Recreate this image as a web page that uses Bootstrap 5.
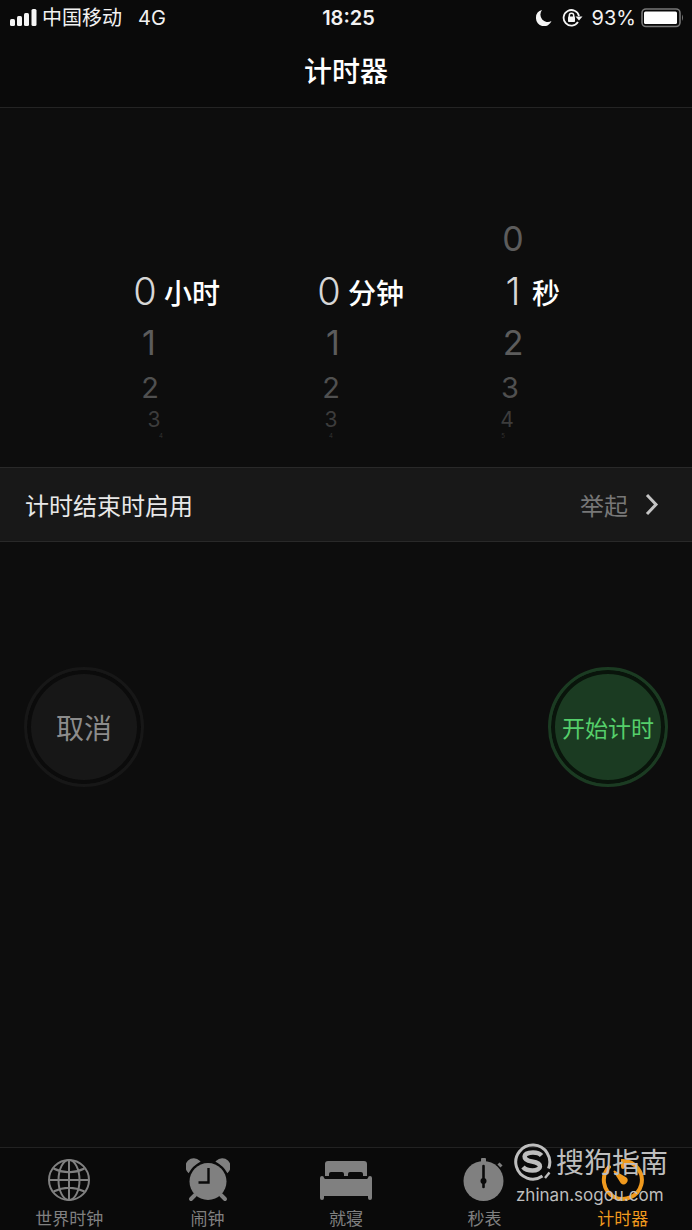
<!DOCTYPE html>
<html lang="zh-CN" data-bs-theme="dark">
<head>
<meta charset="utf-8">
<meta name="viewport" content="width=device-width, initial-scale=1">
<title>计时器</title>
<link rel="stylesheet" href="https://cdn.jsdelivr.net/npm/bootstrap@5.3.0/dist/css/bootstrap.min.css">
<style>
  body { background: #0d0d0d; color: #f2f2f2; font-family: Inter, "Noto Sans CJK SC", sans-serif; font-size: 20px; line-height: 24px; }
  .top-area { background: #0a0a0a; border-bottom: 1px solid #242424; }
  .status-bar { height: 36px; padding: 0 8px 0 9px; display: grid; grid-template-columns: 1fr auto 1fr; align-items: center; }
  .clock-time { font-weight: 600; padding-left: 4px; }
  .screen-title { font-size: 28px; line-height: 40px; font-weight: 500; padding: 16px 0 15px; }
  .picker { padding: 105px 0 28px; }
  .wheel { width: 184px; padding-left: 60px; }
  .wheel-row { display: flex; align-items: center; height: 52px; font-size: 34px; line-height: 34px; color: #5c5c5c; }
  .digit { width: 30px; text-align: center; flex: none; }
  .wheel-row.current { font-size: 38px; color: #d6d6d6; }
  .current .digit { font-weight: 300; }
  .wheel-row .unit { font-size: 28px; font-weight: 500; color: #fff; padding: 5px 0 0 4px; white-space: nowrap; }
  .wheel-row.far { height: 38px; font-size: 29px; color: #505050; }
  .wheel-row.edge { height: 26px; font-size: 21px; line-height: 20px; color: #3c3c3c; }
  .wheel-row.sliver { height: 6px; font-size: 6px; line-height: 6px; color: #333; }
  .hours .near, .minutes .near { padding-left: 4px; }
  .hours .far { padding-left: 5px; }
  .hours .edge { padding-left: 9px; }
  .hours .sliver { padding-left: 16px; }
  .minutes .far, .minutes .edge, .minutes .sliver { padding-left: 2px; }
  .seconds .far { margin-left: -3px; }
  .seconds .edge { margin-left: -6px; }
  .seconds .sliver { margin-left: -10px; }
  .option-row { background: #181818; border-top: 1px solid #292929; border-bottom: 1px solid #292929; height: 75px; padding: 0 32px 0 25px; font-size: 24px; color: #e8e8e8; }
  .option-label, .option-value { padding-top: 5px; }
  .option-row:hover { color: #fff; }
  .option-value { color: #777; }
  .actions { padding: 125px 24px 0; }
  .round-btn { width: 120px; height: 120px; border-radius: 50%; padding: 4px 0 0; border: 3px solid #171717; background: #171717; box-shadow: inset 0 0 0 4px #0b0b0b; color: #8c8c8c; font-size: 28px; white-space: nowrap; }
  .round-btn.go { background: #1b3b22; border-color: #1b3b22; box-shadow: inset 0 0 0 4px #09140b; color: #55cf6b; font-size: 23px; }
  .tab-bar { background: #0a0a0a; border-top: 1px solid #222; }
  .tab-item { flex: 1 1 0; padding: 10px 0 0; height: 82px; color: #808080; font-size: 17px; line-height: 24px; }
  .tab-item svg { display: block; margin: 0 auto 5px; }
  .tab-item.on { color: #f09a1e; }
  .watermark { position: absolute; right: 24px; top: -7px; color: #bebebe; pointer-events: none; }
  .wm-name { font-size: 28px; line-height: 40px; padding-top: 2px; }
  .wm-site { font-size: 17px; line-height: 20px; padding: 2px 0 0 2px; }
</style>
</head>
<body>
<div class="d-flex flex-column min-vh-100">
  <header class="top-area">
    <div class="status-bar">
      <div class="d-flex align-items-center">
        <svg class="me-1" width="29" height="18" fill="#f5f5f5" aria-hidden="true"><rect x="1" y="10" width="5" height="7" rx="1.5"/><rect x="8" y="7" width="5" height="10" rx="1.5"/><rect x="15" y="4" width="5" height="13" rx="1.5"/><rect x="22.500" y="0" width="5" height="17" rx="1.5"/></svg>
        <span>中国移动</span><span class="ms-3">4G</span>
      </div>
      <div class="clock-time">18:25</div>
      <div class="d-flex align-items-center justify-content-end">
        <svg width="18" height="16" viewBox="0 0 18 16" fill="#f5f5f5" aria-hidden="true"><path d="M6 0A8 8 0 0 0 0 8A8 8 0 0 0 15.500 11A7.400 7.400 0 0 1 6 0Z"/></svg>
        <svg class="mx-2" width="22" height="18" viewBox="0 0 22 18" fill="none" stroke="#f5f5f5" stroke-width="1.800" aria-hidden="true"><path d="M16 13A7.800 7.800 0 1 1 17 7"/><path d="M13.500 7.500h7l-3.500 4Z" fill="#f5f5f5" stroke="none"/><path d="M7.300 8V6.500a2.200 2.200 0 0 1 4.400 0V8" stroke-width="1.500"/><rect x="6" y="7.500" width="7" height="5.500" rx=".8" fill="#f5f5f5" stroke="none"/></svg>
        <span class="me-1">93%</span>
        <svg width="44" height="20" viewBox="0 0 44 20" aria-hidden="true"><rect x="2" y="1" width="38" height="17.500" rx="4" fill="none" stroke="#777" stroke-width="1.600"/><rect x="4" y="3.500" width="33" height="12.500" rx="1.500" fill="#fff"/><path d="M42 6.500q2 3.200 0 6.500Z" fill="#777"/></svg>
      </div>
    </div>
    <h1 class="screen-title text-center mb-0">计时器</h1>
  </header>

  <main class="flex-grow-1">
    <section class="picker d-flex justify-content-center" aria-label="时长">
      <div class="wheel hours">
        <div class="wheel-row"></div>
        <div class="wheel-row current"><span class="digit">0</span><span class="unit">小时</span></div>
        <div class="wheel-row near"><span class="digit">1</span></div>
        <div class="wheel-row far"><span class="digit">2</span></div>
        <div class="wheel-row edge"><span class="digit">3</span></div>
        <div class="wheel-row sliver"><span class="digit">4</span></div>
      </div>
      <div class="wheel minutes">
        <div class="wheel-row"></div>
        <div class="wheel-row current"><span class="digit">0</span><span class="unit">分钟</span></div>
        <div class="wheel-row near"><span class="digit">1</span></div>
        <div class="wheel-row far"><span class="digit">2</span></div>
        <div class="wheel-row edge"><span class="digit">3</span></div>
        <div class="wheel-row sliver"><span class="digit">4</span></div>
      </div>
      <div class="wheel seconds">
        <div class="wheel-row"><span class="digit">0</span></div>
        <div class="wheel-row current"><span class="digit">1</span><span class="unit">秒</span></div>
        <div class="wheel-row near"><span class="digit">2</span></div>
        <div class="wheel-row far"><span class="digit">3</span></div>
        <div class="wheel-row edge"><span class="digit">4</span></div>
        <div class="wheel-row sliver"><span class="digit">5</span></div>
      </div>
    </section>

    <a href="#" class="option-row d-flex align-items-center justify-content-between text-decoration-none">
      <span class="option-label">计时结束时启用</span>
      <span class="d-flex align-items-center gap-3"><span class="option-value">举起</span>
        <svg width="16" height="24" fill="none" stroke="#c4c4c4" stroke-width="3" aria-hidden="true"><path d="M3 2l9 9.500L3 21"/></svg></span>
    </a>

    <section class="actions d-flex justify-content-between">
      <button type="button" class="round-btn">取消</button>
      <button type="button" class="round-btn go">开始计时</button>
    </section>
  </main>

  <nav class="tab-bar d-flex position-relative" aria-label="时钟">
    <a href="#" class="tab-item text-center text-decoration-none">
      <svg width="44" height="44" viewBox="0 0 44 44" fill="none" stroke="currentColor" stroke-width="2" aria-hidden="true"><circle cx="22" cy="22" r="20"/><ellipse cx="22" cy="22" rx="10.500" ry="20"/><path d="M22 2v40M2 22h40M6.500 10.500Q22 18 37.500 10.500M6.500 33.500Q22 26 37.500 33.500"/></svg>世界时钟</a>
    <a href="#" class="tab-item text-center text-decoration-none">
      <svg width="44" height="44" viewBox="0 0 44 44" fill="currentColor" aria-hidden="true"><circle cx="22" cy="23.500" r="18.500"/><path d="M2.500 13.500A7 7 0 0 1 13 3.500Q6 7.500 2.500 13.500ZM41.500 13.500A7 7 0 0 0 31 3.500Q38 7.500 41.500 13.500Z" stroke="currentColor" stroke-width="2"/><path d="M9 37l-4 4M35 37l4 4" stroke="currentColor" stroke-width="4" stroke-linecap="round"/><path d="M22.500 10v14.500H12.500" fill="none" stroke="#0a0a0a" stroke-width="2.400"/></svg>闹钟</a>
    <a href="#" class="tab-item text-center text-decoration-none">
      <svg width="54" height="44" viewBox="0 0 54 44" fill="currentColor" aria-hidden="true"><path d="M6 18V6a3 3 0 0 1 3-3H45a3 3 0 0 1 3 3V18H44V16q0-2-2-2H31q-2 0-2 2v2H25V16q0-2-2-2H12q-2 0-2 2v2Z"/><path d="M1 20a2 2 0 0 1 4 0l1 1H48l1-1a2 2 0 0 1 4 0V40a2 2 0 0 1-4 0V38H5v2a2 2 0 0 1-4 0Z"/></svg>就寝</a>
    <a href="#" class="tab-item text-center text-decoration-none">
      <svg width="44" height="44" viewBox="0 0 44 44" fill="currentColor" aria-hidden="true"><circle cx="21.500" cy="23" r="20"/><rect x="19" y="0" width="5" height="5" rx="1"/><path d="M36.500 5.500l3 3" stroke="currentColor" stroke-width="3"/><path d="M21.500 8v21" stroke="#0a0a0a" stroke-width="2.600" stroke-linecap="round"/><circle cx="21.500" cy="23" r="3" fill="#0a0a0a"/></svg>秒表</a>
    <a href="#" class="tab-item on text-center text-decoration-none" aria-current="page">
      <svg width="44" height="44" viewBox="0 0 44 44" fill="none" stroke="currentColor" stroke-width="4" stroke-linecap="round" aria-hidden="true"><path d="M8 9A19 19 0 1 0 22 3V9"/><path d="M13.500 13.500L24.500 20A3 3 0 0 1 20.500 24.500Z" fill="currentColor" stroke-width="2" stroke-linejoin="round"/></svg>计时器</a>
    <div class="watermark">
      <div class="d-flex align-items-center gap-1">
        <svg width="38" height="40" viewBox="0 0 38 40" fill="none" stroke="currentColor" stroke-width="3" aria-hidden="true"><path d="M28.500 34A17 17 0 1 1 34.500 26.500"/><path d="M31 36l4.500-5.500" stroke-width="2.500"/><path d="M27.500 13.500Q25 10.500 19 10.500C8 10.500 8 18 18 19.500C29 21 28 28.500 18.500 28.500Q12 28.500 9 25" stroke-width="4.500"/></svg>
        <span class="wm-name">搜狗指南</span>
      </div>
      <div class="wm-site">zhinan.sogou.com</div>
    </div>
  </nav>
</div>
<script src="https://cdn.jsdelivr.net/npm/bootstrap@5.3.0/dist/js/bootstrap.bundle.min.js"></script>
</body>
</html>
